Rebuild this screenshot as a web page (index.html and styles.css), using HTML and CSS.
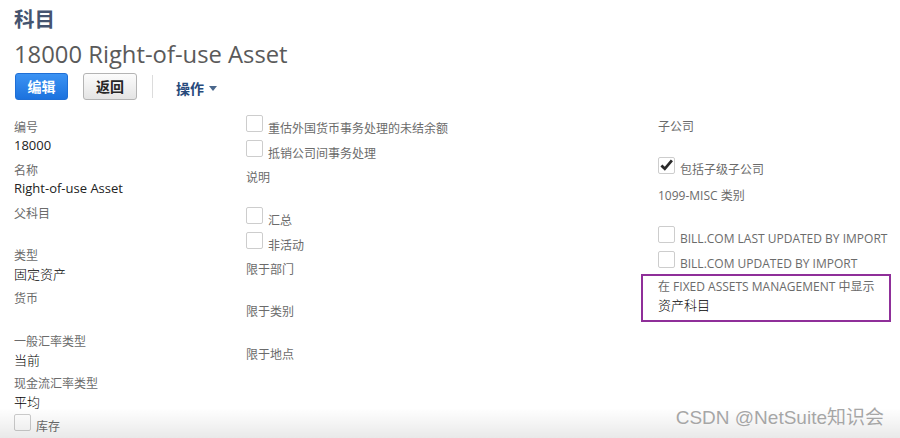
FILE: index.html
```html
<!DOCTYPE html>
<html lang="zh-CN">
<head>
<meta charset="utf-8">
<title>科目</title>
<link rel="stylesheet" href="styles.css">
</head>
<body>
<div class="page">
  <h1 class="page-title">科目</h1>
  <h2 class="record-name">18000 Right-of-use Asset</h2>
  <div class="toolbar">
    <button class="btn btn-primary">编辑</button>
    <button class="btn btn-default">返回</button>
    <span class="divider"></span>
    <span class="actions">操作<span class="caret"></span></span>
  </div>

  <div class="fields">
    <div class="col col-1">
      <div class="field"><div class="label">编号</div><div class="value">18000</div></div>
      <div class="field"><div class="label">名称</div><div class="value">Right-of-use Asset</div></div>
      <div class="field"><div class="label">父科目</div><div class="value"></div></div>
      <div class="field"><div class="label">类型</div><div class="value value-cjk">固定资产</div></div>
      <div class="field"><div class="label">货币</div><div class="value"></div></div>
      <div class="field"><div class="label">一般汇率类型</div><div class="value value-cjk">当前</div></div>
      <div class="field"><div class="label">现金流汇率类型</div><div class="value value-cjk">平均</div></div>
      <div class="cb"><span class="box"></span><span class="cb-label">库存</span></div>
    </div>

    <div class="col col-2">
      <div class="cb"><span class="box"></span><span class="cb-label">重估外国货币事务处理的未结余额</span></div>
      <div class="cb"><span class="box"></span><span class="cb-label">抵销公司间事务处理</span></div>
      <div class="field"><div class="label">说明</div><div class="value"></div></div>
      <div class="cb"><span class="box"></span><span class="cb-label">汇总</span></div>
      <div class="cb"><span class="box"></span><span class="cb-label">非活动</span></div>
      <div class="field"><div class="label">限于部门</div><div class="value"></div></div>
      <div class="field"><div class="label">限于类别</div><div class="value"></div></div>
      <div class="field"><div class="label">限于地点</div><div class="value"></div></div>
    </div>

    <div class="col col-3">
      <div class="field"><div class="label">子公司</div><div class="value"></div></div>
      <div class="cb cb-checked"><span class="box"><svg viewBox="0 0 17 17" width="17" height="17"><path d="M3.4 8.4 L6.8 11.8 L13.9 3.4" fill="none" stroke="#2a2a2a" stroke-width="2.8" stroke-linejoin="miter"/></svg></span><span class="cb-label">包括子级子公司</span></div>
      <div class="field"><div class="label">1099-MISC 类别</div><div class="value"></div></div>
      <div class="cb"><span class="box"></span><span class="cb-label">BILL.COM LAST UPDATED BY IMPORT</span></div>
      <div class="cb"><span class="box"></span><span class="cb-label">BILL.COM UPDATED BY IMPORT</span></div>
      <div class="highlight">
        <div class="label">在 FIXED ASSETS MANAGEMENT 中显示</div>
        <div class="value value-cjk">资产科目</div>
      </div>
    </div>
  </div>
</div>
<div class="watermark">CSDN @NetSuite知识会</div>
<div class="bottom-shade"></div>
</body>
</html>
```

FILE: styles.css
```css
html, body {
  margin: 0;
  padding: 0;
  background: #ffffff;
}

body {
  width: 900px;
  height: 438px;
  overflow: hidden;
  position: relative;
  font-family: "Open Sans", "Noto Sans CJK SC", sans-serif;
  color: #222222;
}

.page {
  padding: 0 0 0 14px;
}

.page-title {
  margin: 6px 0 0;
  font-size: 20.5px;
  line-height: 25px;
  font-weight: 700;
  color: #45546f;
  font-family: "Noto Sans CJK SC", "Open Sans", sans-serif;
}

.record-name {
  margin: 8px 0 0;
  font-size: 23.8px;
  line-height: 30px;
  font-weight: 400;
  color: #5a5a5a;
}

.toolbar {
  margin-top: 4px;
  display: flex;
  align-items: center;
  height: 27px;
}

.btn {
  height: 27px;
  padding: 0 11px;
  border-radius: 3px;
  font-family: "Noto Sans CJK SC", sans-serif;
  font-size: 14px;
  font-weight: 700;
  line-height: 25px;
  cursor: pointer;
}

.btn-primary {
  margin-left: 1px;
  width: 53px;
  border: 1px solid #1f6fd6;
  background: linear-gradient(#3c93f3, #1c72de);
  color: #ffffff;
}

.btn-default {
  margin-left: 15px;
  width: 54px;
  border: 1px solid #b4b4b4;
  background: linear-gradient(#fcfcfc, #e4e4e4);
  color: #262626;
}

.divider {
  margin-left: 15px;
  width: 1px;
  height: 23px;
  background: #dcdcdc;
}

.actions {
  margin-left: 23px;
  margin-top: 2px;
  font-family: "Noto Sans CJK SC", sans-serif;
  font-size: 14px;
  font-weight: 700;
  color: #27497b;
  display: flex;
  align-items: center;
}

.caret {
  margin-left: 5px;
  margin-top: 1px;
  width: 0;
  height: 0;
  border-left: 4px solid transparent;
  border-right: 4px solid transparent;
  border-top: 5px solid #4a678c;
}

.fields {
  margin-top: 15px;
  display: grid;
  grid-template-columns: 232px 412px 1fr;
}

.col {
  display: flex;
  flex-direction: column;
}

.col-1 { padding-top: 4.3px; }
.col-2 { padding-top: 0; }
.col-3 { padding-top: 3.3px; }

.label {
  font-size: 12px;
  line-height: 18px;
  color: #6b6b6b;
}

.value {
  font-size: 13px;
  line-height: 17px;
  min-height: 17px;
  color: #222222;
}

.value-cjk {
  font-family: "Noto Sans CJK SC", sans-serif;
  font-weight: 300;
  color: #000000;
}

.field + .field { margin-top: 7.7px; }
.field + .cb,
.cb + .field { margin-top: 3.5px; }

.cb {
  display: flex;
  align-items: flex-start;
  height: 25px;
}

.cb-checked {
  height: 27px;
}

.box {
  box-sizing: border-box;
  width: 17px;
  height: 17px;
  border: 1px solid #cdcdcd;
  border-radius: 2px;
  background: #ffffff;
  flex: none;
  position: relative;
}

.box svg {
  position: absolute;
  left: -1px;
  top: -1px;
}

.cb-label {
  margin-left: 5px;
  margin-top: 4.5px;
  font-size: 12px;
  line-height: 17px;
  color: #6b6b6b;
}

.highlight {
  margin: -2px 9px 0 -17px;
  padding: 2.3px 0 7px 15px;
  border: 2px solid #8f2f99;
}

.watermark {
  position: absolute;
  right: 16px;
  top: 407px;
  font-family: "Liberation Sans", "Noto Sans CJK SC", sans-serif;
  font-size: 19px;
  line-height: 22px;
  color: #a6a6a6;
  text-shadow: 0 0 1px #ffffff;
  z-index: 2;
}

.bottom-shade {
  position: absolute;
  left: 0;
  right: 0;
  bottom: 0;
  height: 30px;
  background: linear-gradient(rgba(0, 0, 0, 0), rgba(0, 0, 0, 0.085));
  pointer-events: none;
  z-index: 1;
}
```
